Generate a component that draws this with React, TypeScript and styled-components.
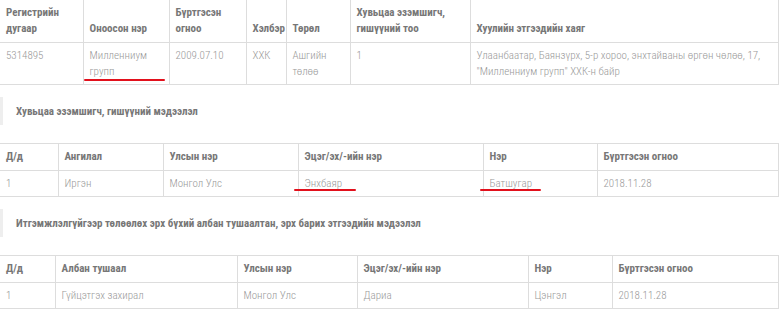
import React from 'react';
import styled, { createGlobalStyle } from "styled-components";

const Global = createGlobalStyle`
  body {
    margin: 0;
    background: #ffffff;
    font-family: "Roboto Condensed", "DejaVu Sans Condensed", "Liberation Sans Narrow", Roboto, sans-serif;
  }
`;

const Page = styled.div`
  width: 778px;
`;

const Table = styled.table`
  width: 100%;
  table-layout: fixed;
  border-collapse: collapse;
  font-size: 11px;
`;

const Th = styled.th<{ $tall?: boolean }>`
  text-align: left;
  vertical-align: bottom;
  color: #777777;
  font-weight: 700;
  line-height: 16px;
  padding: ${p => (p.$tall ? "5px 6px 5px" : "5px 6px 5px")};
  border: 1px solid #dddddd;
  border-top-width: ${p => (p.$tall ? "0" : "1px")};
  &:first-child { border-left: 0; }
`;

const Td = styled.td`
  position: relative;
  vertical-align: top;
  color: #999999;
  font-weight: 300;
  line-height: 16px;
  padding: 5px 6px 4px;
  border: 1px solid #dddddd;
  &:first-child { border-left: 0; }
`;

const Mark = styled.span<{ $left: number; $width: number; $top: number }>`
  &::after {
    content: "";
    position: absolute;
    left: ${p => p.$left}px;
    top: ${p => p.$top}px;
    width: ${p => p.$width}px;
    height: 2px;
    border-radius: 1px;
    background: #e2101c;
  }
`;

const Heading = styled.div<{ $gap: number }>`
  margin: 12px 0 ${p => p.$gap}px;
  height: 28px;
  display: flex;
  align-items: center;
  padding-left: 13px;
  border-left: 3px solid #eeeeee;
  color: #777777;
  font-size: 11px;
  font-weight: 700;
`;

const cols = (widths: number[]) => (
  <colgroup>
    {widths.map((w, i) => <col key={i} style={{ width: w }} />)}
  </colgroup>
);

const App: React.FC = () => {
  return (
    <Page>
      <Global />
      <Table>
        {cols([83, 86, 77, 40, 64, 120, 308])}
        <thead>
          <tr>
            <Th $tall>Регистрийн дугаар</Th>
            <Th $tall>Оноосон нэр</Th>
            <Th $tall>Бүртгэсэн огноо</Th>
            <Th $tall>Хэлбэр</Th>
            <Th $tall>Төрөл</Th>
            <Th $tall>Хувьцаа эзэмшигч, гишүүний тоо</Th>
            <Th $tall>Хуулийн этгээдийн хаяг</Th>
          </tr>
        </thead>
        <tbody>
          <tr>
            <Td>5314895</Td>
            <Td><Mark $left={0} $width={81} $top={36}>Милленниум групп</Mark></Td>
            <Td>2009.07.10</Td>
            <Td>ХХК</Td>
            <Td>Ашгийн төлөө</Td>
            <Td>1</Td>
            <Td>Улаанбаатар, Баянзүрх, 5-р хороо, энхтайваны өргөн чөлөө, 17, "Милленниум групп" ХХК-н байр</Td>
          </tr>
        </tbody>
      </Table>

      <Heading $gap={18}>Хувьцаа эзэмшигч, гишүүний мэдээлэл</Heading>
      <Table>
        {cols([58, 105, 135, 185, 114, 181])}
        <thead>
          <tr>
            <Th>Д/д</Th>
            <Th>Ангилал</Th>
            <Th>Улсын нэр</Th>
            <Th>Эцэг/эх/-ийн нэр</Th>
            <Th>Нэр</Th>
            <Th>Бүртгэсэн огноо</Th>
          </tr>
        </thead>
        <tbody>
          <tr>
            <Td>1</Td>
            <Td>Иргэн</Td>
            <Td>Монгол Улс</Td>
            <Td><Mark $left={-5} $width={62} $top={18}>Энхбаяр</Mark></Td>
            <Td><Mark $left={-4} $width={61} $top={18}>Батшугар</Mark></Td>
            <Td>2018.11.28</Td>
          </tr>
        </tbody>
      </Table>

      <Heading $gap={18}>Итгэмжлэлгүйгээр төлөөлөх эрх бүхий албан тушаалтан, эрх барих этгээдийн мэдээлэл</Heading>
      <Table>
        {cols([55, 182, 120, 171, 84, 166])}
        <thead>
          <tr>
            <Th>Д/д</Th>
            <Th>Албан тушаал</Th>
            <Th>Улсын нэр</Th>
            <Th>Эцэг/эх/-ийн нэр</Th>
            <Th>Нэр</Th>
            <Th>Бүртгэсэн огноо</Th>
          </tr>
        </thead>
        <tbody>
          <tr>
            <Td>1</Td>
            <Td>Гүйцэтгэх захирал</Td>
            <Td>Монгол Улс</Td>
            <Td>Дариа</Td>
            <Td>Цэнгэл</Td>
            <Td>2018.11.28</Td>
          </tr>
        </tbody>
      </Table>
    </Page>
  );
};

export default App;
